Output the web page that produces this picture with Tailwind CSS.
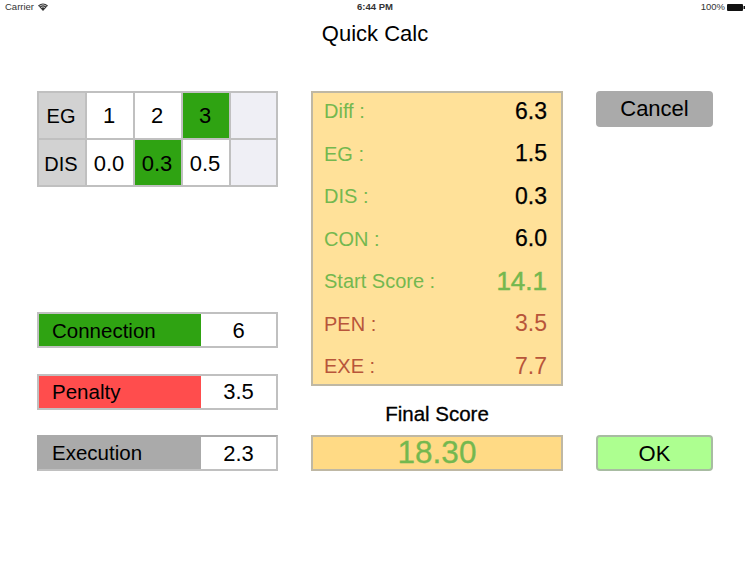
<!DOCTYPE html>
<html lang="en">
<head>
    <meta charset="UTF-8">
    <title>Quick Calc</title>
    <script src="https://cdn.jsdelivr.net/npm/@tailwindcss/browser@4"></script>
</head>
<body class="bg-white w-[750px] h-[562px] overflow-hidden font-['Liberation_Sans',Arial,sans-serif] text-black">

    <!-- Status bar -->
    <div class="h-[14px] px-[5px] grid grid-cols-3 items-center text-[9.5px] leading-[14px] text-[#333]">
        <div class="flex items-center gap-[4px]">
            <span>Carrier</span>
            <svg class="w-[10px] h-[8px]" viewBox="0 0 20 16"><path d="M10 16 L0 5 Q10 -3 20 5 Z" fill="#333"/><path d="M3.2 6 Q10 1 16.8 6 M6 9.2 Q10 6.2 14 9.2" fill="none" stroke="#fff" stroke-width="1.4"/></svg>
        </div>
        <div class="text-center font-bold">6:44 PM</div>
        <div class="flex items-center justify-end gap-[2px]">
            <span>100%</span>
            <svg class="w-[18px] h-[7px]" viewBox="0 0 18 7"><rect width="16" height="7" rx="1" fill="#111"/><rect x="16.5" y="2" width="1.5" height="3" fill="#111"/></svg>
        </div>
    </div>

    <h1 class="h-[40px] leading-[40px] text-center text-[22px]">Quick Calc</h1>

    <div class="flex pl-[37px] pt-[37px] items-start">
        <!-- Left column -->
        <div class="w-[241px]">
            <div class="grid grid-cols-[46px_46px_46px_46px_45px] grid-rows-[45px_45px] gap-[2px] p-[2px] bg-[#c0c0c0] w-[241px] h-[96px] text-[22px]">
                <div class="bg-[#d2d2d2] pr-[2px] text-[20px] flex items-center justify-center">EG</div>
                <div class="bg-white pr-[2px] flex items-center justify-center">1</div>
                <div class="bg-white pr-[2px] flex items-center justify-center">2</div>
                <div class="bg-[#2fa312] pr-[2px] flex items-center justify-center">3</div>
                <div class="bg-[#efeff5]"></div>
                <div class="bg-[#d2d2d2] pr-[2px] pt-[2px] text-[20px] flex items-center justify-center">DIS</div>
                <div class="bg-white pr-[2px] pt-[2px] flex items-center justify-center">0.0</div>
                <div class="bg-[#2fa312] pr-[2px] pt-[2px] flex items-center justify-center">0.3</div>
                <div class="bg-white pr-[2px] pt-[2px] flex items-center justify-center">0.5</div>
                <div class="bg-[#efeff5]"></div>
            </div>

            <div class="mt-[125px] flex flex-col gap-[25.5px] text-[20.5px]">
                <div class="flex h-[36px] border-2 border-[#c0c0c0]">
                    <div class="w-[162px] bg-[#2fa312] pl-[13px] pt-[2px] flex items-center">Connection</div>
                    <div class="flex-1 bg-white flex items-center justify-center text-[22px]">6</div>
                </div>
                <div class="flex h-[36px] border-2 border-[#c0c0c0]">
                    <div class="w-[162px] bg-[#ff4d4d] pl-[13px] pt-[2px] flex items-center">Penalty</div>
                    <div class="flex-1 bg-white flex items-center justify-center text-[22px]">3.5</div>
                </div>
                <div class="flex h-[36px] border-2 border-[#c0c0c0] border-l-[#aaaaaa] border-t-[#aaaaaa]">
                    <div class="w-[162px] bg-[#aaaaaa] pl-[13px] flex items-center">Execution</div>
                    <div class="flex-1 bg-white flex items-center justify-center text-[22px]">2.3</div>
                </div>
            </div>
        </div>

        <!-- Score column -->
        <div class="w-[252px] ml-[33px]">
            <div class="h-[295px] bg-[#ffe199] border-2 border-[#bfb8a4] pl-[11px] pr-[14px] pt-[3px] pb-[3px] flex flex-col justify-between text-[20px]">
                <div class="flex justify-between items-center h-[30px] text-[#74b84f]"><span>Diff :</span><span class="text-[23px] text-black [-webkit-text-stroke:0.25px_black]">6.3</span></div>
                <div class="flex justify-between items-center h-[30px] text-[#74b84f]"><span>EG :</span><span class="text-[23px] text-black [-webkit-text-stroke:0.25px_black]">1.5</span></div>
                <div class="flex justify-between items-center h-[30px] text-[#74b84f]"><span>DIS :</span><span class="text-[23px] text-black [-webkit-text-stroke:0.25px_black]">0.3</span></div>
                <div class="flex justify-between items-center h-[30px] text-[#74b84f]"><span>CON :</span><span class="text-[23px] text-black [-webkit-text-stroke:0.25px_black]">6.0</span></div>
                <div class="flex justify-between items-center h-[30px] text-[#74b84f]"><span>Start Score :</span><span class="text-[26px] [-webkit-text-stroke:0.5px_#74b84f]">14.1</span></div>
                <div class="flex justify-between items-center h-[30px] text-[#b8553a]"><span>PEN :</span><span class="text-[23px]">3.5</span></div>
                <div class="flex justify-between items-center h-[30px] text-[#b8553a]"><span>EXE :</span><span class="text-[23px]">7.7</span></div>
            </div>
            <div class="h-[49px] pt-[8px] flex items-center justify-center text-[20.5px] [-webkit-text-stroke:0.3px_black]">Final Score</div>
            <div class="h-[36px] bg-[#ffda85] border-2 border-[#bfb8a4] flex items-center justify-center text-[31.5px] text-[#74b84f] [-webkit-text-stroke:0.3px_#74b84f]">18.30</div>
        </div>

        <!-- Buttons -->
        <div class="w-[117px] ml-[33px] h-[380px] flex flex-col justify-between text-[22px]">
            <div class="h-[36px] bg-[#aaaaaa] rounded-[4px] pb-[1px] flex items-center justify-center">Cancel</div>
            <div class="h-[36px] bg-[#adff90] border-2 border-[#a8bca2] rounded-[4px] flex items-center justify-center">OK</div>
        </div>
    </div>

</body>
</html>
